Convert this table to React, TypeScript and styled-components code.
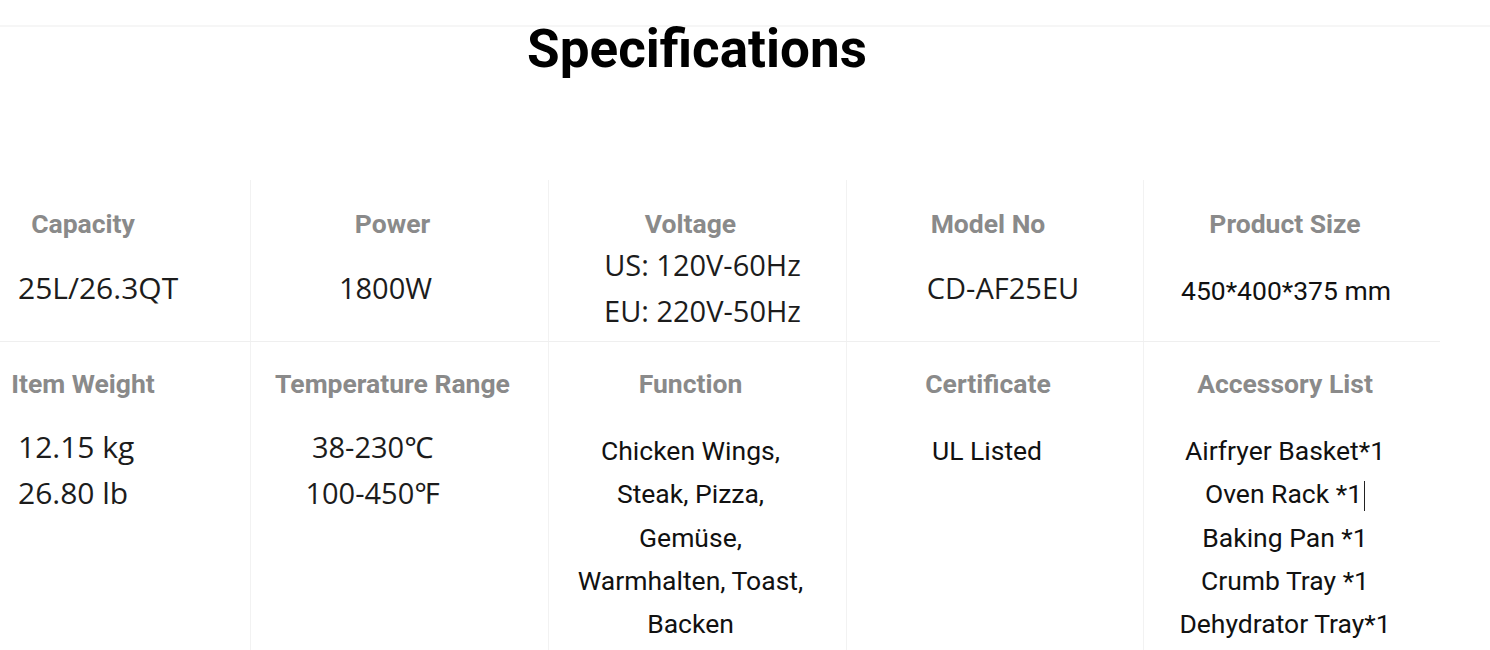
import React from 'react'
import styled, { createGlobalStyle } from 'styled-components'

const GlobalStyle = createGlobalStyle`
	html, body {
		margin: 0;
		padding: 0;
		background: #fff;
	}
	body {
		font-family: Roboto, 'Liberation Sans', sans-serif;
		color: #111;
		overflow: hidden;
	}
`

type Spec = {
	label: string
	kind: 'measure' | 'listing'
	lines: string[]
	shift?: number
	caretOn?: number
}

const topRow: Spec[] = [
	{ label: 'Capacity', kind: 'measure', lines: ['25L/26.3QT'] },
	{ label: 'Power', kind: 'measure', lines: ['1800W'], shift: -7 },
	{ label: 'Voltage', kind: 'measure', lines: ['US: 120V-60Hz', 'EU: 220V-50Hz'], shift: 12 },
	{ label: 'Model No', kind: 'measure', lines: ['CD-AF25EU'], shift: 15 },
	{ label: 'Product Size', kind: 'listing', lines: ['450*400*375 mm'], shift: 1 }
]

const bottomRow: Spec[] = [
	{ label: 'Item Weight', kind: 'measure', lines: ['12.15 kg', '26.80 lb'] },
	{ label: 'Temperature Range', kind: 'measure', lines: ['38-230℃', '100-450℉'], shift: -20 },
	{
		label: 'Function',
		kind: 'listing',
		lines: ['Chicken Wings,', 'Steak, Pizza,', 'Gemüse,', 'Warmhalten, Toast,', 'Backen']
	},
	{ label: 'Certificate', kind: 'listing', lines: ['UL Listed'], shift: -1 },
	{
		label: 'Accessory List',
		kind: 'listing',
		lines: ['Airfryer Basket*1', 'Oven Rack *1', 'Baking Pan *1', 'Crumb Tray *1', 'Dehydrator Tray*1'],
		caretOn: 1
	}
]

const renderLines = (spec: Spec) => {
	const Text = spec.kind === 'measure' ? Measure : Listing
	return (
		<Text $shift={spec.shift ?? 0}>
			{spec.lines.map((line, i) => (
				<div key={i}>
					{line}
					{spec.caretOn === i && <Caret />}
				</div>
			))}
		</Text>
	)
}

export default function App() {
	return (
		<Page>
			<GlobalStyle />
			<Title>Specifications</Title>
			<Table>
				<Row $height={162} $divided>
					{topRow.map((spec, i) => (
						<Cell key={spec.label} $first={i === 0} $top={30}>
							<Label $first={i === 0}>{spec.label}</Label>
							<Centered>{renderLines(spec)}</Centered>
						</Cell>
					))}
				</Row>
				<Row $height={320}>
					{bottomRow.map((spec, i) => (
						<Cell key={spec.label} $first={i === 0} $top={28}>
							<Label $first={i === 0}>{spec.label}</Label>
							<Stack>{renderLines(spec)}</Stack>
						</Cell>
					))}
				</Row>
			</Table>
		</Page>
	)
}

const Page = styled.div`
	width: 1490px;
	margin-top: 25px;
	border-top: 2px solid #f6f6f6;
`

const Title = styled.h1`
	margin: 0;
	padding-right: 96px;
	text-align: center;
	font-family: Roboto, 'Liberation Sans', sans-serif;
	font-weight: 700;
	font-size: 53px;
	line-height: 44px;
	color: #000;
	margin-bottom: 109px;
`

const Table = styled.div`
	width: 1440px;
`

const Row = styled.div<{ $height: number; $divided?: boolean }>`
	display: grid;
	grid-template-columns: 250px 298px 298px 297px 297px;
	height: ${p => p.$height}px;
	box-sizing: border-box;
	border-bottom: ${p => (p.$divided ? '1px solid #efefef' : 'none')};
`

const Cell = styled.div<{ $first?: boolean; $top: number }>`
	display: flex;
	flex-direction: column;
	align-items: ${p => (p.$first ? 'stretch' : 'center')};
	padding-top: ${p => p.$top}px;
	padding-right: ${p => (p.$first ? 0 : 14)}px;
	border-left: ${p => (p.$first ? 'none' : '1px solid #f2f2f2')};
	box-sizing: border-box;
	text-align: center;
`

const Label = styled.div<{ $first?: boolean }>`
	font-family: Roboto, 'Liberation Sans', sans-serif;
	font-weight: 700;
	font-size: 26.5px;
	line-height: 28px;
	color: #8a8a8a;
	white-space: nowrap;
	padding-right: ${p => (p.$first ? 84 : 0)}px;
	text-align: center;
`

const Centered = styled.div`
	margin-top: 8px;
	height: 84px;
	display: flex;
	flex-direction: column;
	justify-content: center;
`

const Stack = styled.div`
	margin-top: 26px;
`

const shiftPadding = (shift: number) =>
	shift >= 0 ? `padding-left: ${shift * 2}px;` : `padding-right: ${-shift * 2}px;`

const Measure = styled.div<{ $shift: number }>`
	font-family: 'Open Sans', 'Noto Sans', 'DejaVu Sans', sans-serif;
	font-size: 29px;
	line-height: 46px;
	color: #1c1c1c;
	white-space: nowrap;
	${p => shiftPadding(p.$shift)}
	${Cell}:first-child & {
		text-align: left;
		padding-left: 18px;
		font-size: 30px;
	}
`

const Listing = styled.div<{ $shift: number }>`
	font-family: Roboto, 'Liberation Sans', sans-serif;
	font-size: 26.5px;
	line-height: 43.3px;
	color: #111;
	white-space: nowrap;
	padding-top: 5px;
	${p => shiftPadding(p.$shift)}
`

const Caret = styled.span`
	display: inline-block;
	width: 1px;
	height: 30px;
	margin-left: 2px;
	vertical-align: middle;
	background: #222;
`
